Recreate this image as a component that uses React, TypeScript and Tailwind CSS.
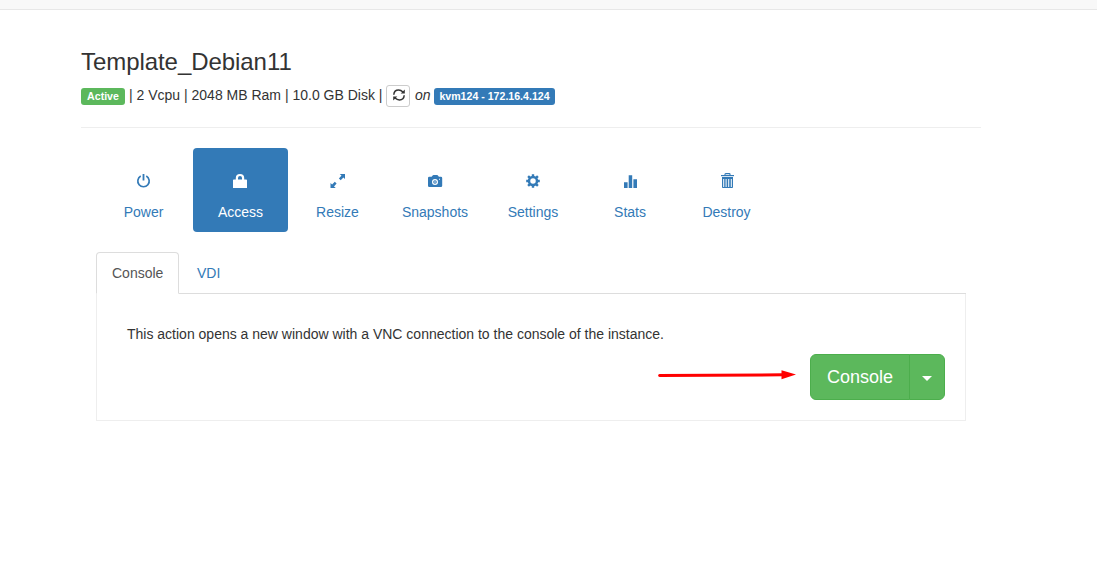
import type { ReactNode } from "react";

function Icon({ children }: { children: ReactNode }) {
  return (
    <svg width="14" height="14" viewBox="0 0 14 14" fill="currentColor" className="block overflow-visible">
      {children}
    </svg>
  );
}

const PowerIcon = () => (
  <Icon>
    <path d="M4.7 2.1a5.7 5.7 0 1 0 5.6 0" fill="none" stroke="currentColor" strokeWidth="1.7" />
    <rect x="6.6" y="0" width="1.8" height="6.6" rx=".4" />
  </Icon>
);
const LockIcon = () => (
  <Icon>
    <path d="M0 6.3Q0 5.5 .8 5.5H2.8V4Q2.8 0 7 0T11.2 4V5.5H13.2Q14 5.5 14 6.3V14H0ZM5 5.5H9V4Q9 2 7 2T5 4Z" fillRule="evenodd" />
  </Icon>
);
const ResizeIcon = () => (
  <Icon>
    <path d="M9.7 0H15V5L13.4 3.6L10.7 6.2L8.9 4.4L11.5 1.6ZM5.8 14H.5V9L2.1 10.4L4.8 7.8L6.6 9.6L4 12.4Z" />
  </Icon>
);
const CameraIcon = () => (
  <Icon>
    <path
      d="M3.6 2.7L4.9 1.2Q5.2 1 5.6 1H9Q9.4 1 9.7 1.3L10.9 2.7H12.9Q14.2 2.7 14.2 4V11.7Q14.2 13 12.9 13H1.3Q0 13 0 11.7V4Q0 2.7 1.3 2.7ZM7 5A3 3 0 1 0 7 11A3 3 0 1 0 7 5ZM11 4.8V5.8H12V4.8Z"
      fillRule="evenodd"
    />
    <path d="M7 6.2A1.8 1.8 0 1 0 7 9.8A1.8 1.8 0 1 0 7 6.2ZM7 7.3A.7 .7 0 1 1 7 8.7A.7 .7 0 1 1 7 7.3Z" fillRule="evenodd" />
  </Icon>
);
const CogIcon = () => (
  <Icon>
    <circle cx="7" cy="7" r="4" fill="none" stroke="currentColor" strokeWidth="2.5" />
    <path
      d="M7 .2V3M7 11V13.8M.2 7H3M11 7H13.8M2.1 2.1L4.2 4.2M9.8 9.8L11.9 11.9M11.9 2.1L9.8 4.2M4.2 9.8L2.1 11.9"
      stroke="currentColor"
      strokeWidth="2.4"
    />
  </Icon>
);
const StatsIcon = () => (
  <Icon>
    <path d="M1 8.2H4.6V14H1ZM5.7 1.2H9.2V14H5.7ZM10.4 5.2H14V14H10.4Z" />
  </Icon>
);
const TrashIcon = () => (
  <svg width="14" height="16" viewBox="0 0 14 16" fill="currentColor" className="-my-px block overflow-visible">
    <path d="M5 2.4V1.3Q5 .6 5.7 .6H9.3Q10 .6 10 1.3V2.4" fill="none" stroke="currentColor" strokeWidth="1.1" />
    <rect x="1" y="2" width="13" height="1.2" />
    <path d="M2 4.1H13V14.2Q13 15 12.1 15H2.9Q2 15 2 14.2ZM3.2 6V14H4.2V6ZM5.6 6V14H6.6V6ZM8.2 6V14H9.2V6ZM10.8 6V14H11.8V6Z" fillRule="evenodd" />
  </svg>
);
const RefreshIcon = () => (
  <svg width="12" height="12" viewBox="0 0 12 12" fill="none" stroke="currentColor" strokeWidth="1.5" className="-mt-[2px] ml-px block overflow-visible">
    <path d="M.8 5.7C1 2.7 3.1 1.1 5.6 1.1Q8 1.1 9.9 3M11.2 6.3C11 9.3 8.9 10.9 6.4 10.9Q4 10.9 2.1 9" />
    <path d="M11.8 .5V4.6H7.7ZM.2 11.5V7.4H4.3Z" fill="currentColor" stroke="none" />
  </svg>
);

const actions = [
  { label: "Power", icon: <PowerIcon />, size: "w-[95px]", nudge: "mr-px" },
  { label: "Access", icon: <LockIcon />, active: true, size: "w-[95px]", nudge: "mr-px" },
  { label: "Resize", icon: <ResizeIcon />, size: "w-[95px]", nudge: "mr-px" },
  { label: "Snapshots", icon: <CameraIcon />, size: "w-[96px]", nudge: "mr-px" },
  { label: "Settings", icon: <CogIcon />, size: "w-[96px]", nudge: "" },
  { label: "Stats", icon: <StatsIcon />, size: "w-[94px]", nudge: "" },
  { label: "Destroy", icon: <TrashIcon />, size: "w-[95px]", nudge: "ml-px" },
];

export default function App() {
  return (
    <div className="h-[564px] overflow-hidden bg-white font-['Liberation_Sans',Arial,sans-serif] text-sm leading-5 text-[#333]">
      <header className="h-[10px] border-b border-[#e7e7e7] bg-[#f8f8f8]" />
      <main className="ml-[81px] w-[900px] pt-[39px]">
        <h1 className="text-2xl leading-[26px] tracking-[-0.06px]">Template_Debian11</h1>
        <div className="mt-[9px] flex h-[22px] items-center">
          <span className="mt-[2px] flex h-[17px] w-11 items-center justify-center rounded-[3px] bg-[#5cb85c] text-[10.6px] leading-none font-bold text-white">
            Active
          </span>
          <span className="ml-1 w-[257px] whitespace-nowrap">| 2 Vcpu | 2048 MB Ram | 10.0 GB Disk |</span>
          <button className="mt-px flex h-[22px] w-6 items-center justify-center rounded-[3px] border border-[#ccc] bg-white">
            <RefreshIcon />
          </button>
          <em className="ml-[5px] w-[19px]">on</em>
          <span className="mt-[2px] flex h-[17px] w-[121px] items-center justify-center rounded-[3px] bg-[#337ab7] text-[10.6px] leading-none font-bold whitespace-nowrap text-white">
            kvm124 - 172.16.4.124
          </span>
        </div>
        <hr className="mt-[21px] border-[#eee]" />

        <div className="mt-5 px-[15px]">
          <nav className="flex gap-[2px]">
            {actions.map((action) => (
              <a
                key={action.label}
                className={`flex h-[84px] flex-col items-center rounded pt-[26px] ${action.size} ${
                  action.active ? "bg-[#337ab7] text-white" : "text-[#337ab7]"
                }`}
              >
                <span className={action.nudge}>{action.icon}</span>
                <span className="mt-[14px]">{action.label}</span>
              </a>
            ))}
          </nav>

          <div className="mt-5 flex h-[42px] border-b border-[#ddd]">
            <a className="h-[42px] w-[83px] rounded-t border border-[#ddd] border-b-white bg-white px-[15px] py-[10px] text-[#555]">
              Console
            </a>
            <a className="ml-[2px] px-4 py-[11px] text-[#337ab7]">VDI</a>
          </div>
          <section className="h-[127px] border border-t-0 border-[#eee] px-5 pt-[30px]">
            <p className="pl-[10px]">This action opens a new window with a VNC connection to the console of the instance.</p>
            <div className="mt-[10px] flex items-start justify-end">
              <svg width="140" height="12" viewBox="0 0 140 12" className="mt-[15px] mr-[14px]" fill="red">
                <path d="M3.6 6.6L127 5.8" stroke="red" strokeWidth="3" strokeLinecap="round" />
                <path d="M125.5 1.2L140 5.6L125.5 10.2Z" />
              </svg>
              <button className="h-[46px] w-[100px] rounded-l-md border border-[#4cae4c] bg-[#5cb85c] text-lg leading-6 text-white">
                Console
              </button>
              <button className="-ml-px flex h-[46px] w-9 items-center justify-center rounded-r-md border border-[#4cae4c] bg-[#5cb85c]">
                <svg width="10" height="5" viewBox="0 0 10 5" fill="white" className="mt-[3px]">
                  <path d="M0 0H10L5 5Z" />
                </svg>
              </button>
            </div>
          </section>
        </div>
      </main>
    </div>
  );
}
